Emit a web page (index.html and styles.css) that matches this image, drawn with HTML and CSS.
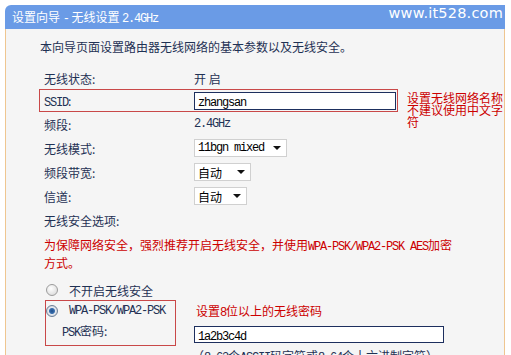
FILE: index.html
```html
<!DOCTYPE html>
<html lang="zh-CN">
<head>
  <meta charset="UTF-8">
  <title>设置向导 - 无线设置</title>
  <link rel="stylesheet" href="styles.css">
</head>
<body>

  <div class="wizard">
    <!-- 标题栏 -->
    <div class="wizard-head">
      <span class="title">设置向导 <span class="asc">-</span> 无线设置 <span class="asc">2.4GHz</span></span>
      <span class="site">www.it528.com</span>
    </div>

    <div class="wizard-body">
      <p class="intro">本向导页面设置路由器无线网络的基本参数以及无线安全。</p>

      <div class="row first">
        <span class="label">无线状态:</span>
        <span class="value">开 启</span>
      </div>

      <div class="row-ssid">
        <div class="row boxed">
          <span class="label"><span class="asc">SSID</span>:</span>
          <span class="textbox ssid"><span class="asc">zhangsan</span></span>
        </div>
        <div class="note">设置无线网络名称不建议使用中文字符</div>
      </div>

      <div class="row">
        <span class="label">频段:</span>
        <span class="value asc">2.4GHz</span>
      </div>

      <div class="row">
        <span class="label">无线模式:</span>
        <span class="select mode"><span class="asc">11bgn mixed</span><i class="arrow"></i></span>
      </div>

      <div class="row">
        <span class="label">频段带宽:</span>
        <span class="select width"><span>自动</span><i class="arrow"></i></span>
      </div>

      <div class="row">
        <span class="label">信道:</span>
        <span class="select channel"><span>自动</span><i class="arrow"></i></span>
      </div>

      <div class="row">
        <span class="label">无线安全选项:</span>
      </div>

      <p class="warn">为保障网络安全，强烈推荐开启无线安全，并使用<span class="asc">WPA-PSK/WPA2-PSK AES</span>加密方式。</p>

      <div class="option off">
        <span class="radio"></span>
        <span>不开启无线安全</span>
      </div>

      <div class="psk">
        <div class="psk-box">
          <div class="option">
            <span class="radio on"></span>
            <span class="asc">WPA-PSK/WPA2-PSK</span>
          </div>
          <div class="psk-label"><span class="asc">PSK</span>密码:</div>
        </div>
        <div class="psk-right">
          <div class="psk-note">设置<span class="asc">8</span>位以上的无线密码</div>
          <span class="textbox pass"><span class="asc">1a2b3c4d</span></span>
        </div>
      </div>

      <p class="hint">（<span class="asc">8-63</span>个<span class="asc">ASCII</span>码字符或<span class="asc">8-64</span>个十六进制字符）</p>
    </div>
  </div>

</body>
</html>
```

FILE: styles.css
```css
* {
  box-sizing: border-box;
}

body {
  margin: 0;
  background-color: #fff;
  font-family: "Noto Sans CJK SC", sans-serif;
  font-size: 12px;
  color: #1f3154;
}

p {
  margin: 0;
}

/* ascii in the old router UI is half-width */
.asc {
  font-family: "Liberation Mono", monospace;
  font-size: 12px;
  letter-spacing: -1.2px;
  line-height: 1;
}

.wizard {
  width: 500px;
  margin: 5px 0 0 5px;
}

.wizard-head {
  height: 24px;
  background-color: #6a9be6;
  border-radius: 6px 0 0 0;
  display: flex;
  justify-content: space-between;
  color: #fff;
  padding: 0 2px 0 7px;
}

.title {
  line-height: 24px;
}

.site {
  font-family: "DejaVu Sans", sans-serif;
  font-size: 14.5px;
  line-height: 16px;
  letter-spacing: 0.2px;
}

.wizard-body {
  background-color: #f5f5f5;
  border-left: 1px solid #efc690;
  border-right: 1px solid #efc690;
  padding: 10px 0 0 34px;
  height: 330px;
}

.intro {
  line-height: 16px;
  margin-bottom: 13px;
}

.row {
  display: grid;
  grid-template-columns: 150px auto;
  align-items: center;
  height: 24px;
  padding-left: 4px;
  margin-left: -1px;
  border: 1px solid transparent;
}

.row.first {
  height: 21px;
}

.row-ssid {
  display: flex;
  height: 23px;
}

.row.boxed {
  width: 359px;
  height: 23px;
  border-color: #c94848;
}

.note {
  width: 96px;
  margin-left: 9px;
  padding-top: 3px;
  line-height: 12px;
  color: #cc0000;
}

.textbox {
  display: block;
  height: 18px;
  line-height: 16px;
  border: 1px solid #1d2f5e;
  background-color: #fff;
  padding: 0 3px;
  color: #000;
}

.textbox.ssid {
  width: 202px;
}

.textbox.pass {
  width: 250px;
  height: 17px;
  line-height: 15px;
  margin-top: 4px;
}

.select {
  display: flex;
  justify-content: space-between;
  align-items: center;
  height: 18px;
  border: 1px solid #d0d0d0;
  background-color: #fff;
  padding: 0 5px 0 3px;
  color: #000;
}

.select.mode {
  width: 93px;
}

.select.width {
  width: 57px;
}

.select.channel {
  width: 53px;
}

.arrow {
  width: 0;
  height: 0;
  border-left: 4px solid transparent;
  border-right: 4px solid transparent;
  border-top: 4px solid #111;
}

.warn {
  margin: 4px 0 0 4px;
  width: 415px;
  line-height: 18px;
  color: #cc0000;
}

.option {
  display: flex;
  align-items: center;
  height: 20px;
  gap: 11px;
}

.option.off {
  margin: 8px 0 0 6px;
}

.radio {
  width: 12px;
  height: 12px;
  border-radius: 50%;
  border: 1px solid #9c9c9c;
  background: radial-gradient(circle at 40% 35%, #fff, #d4d4d4);
}

.radio.on {
  border-color: #6d7f96;
  background: radial-gradient(circle at 50% 50%, #1f4f8c 0, #3a6fae 2.5px, #e4e8ee 3.5px, #c9ced6 6px);
}

.psk {
  display: flex;
  margin-left: 5px;
}

.psk-box {
  width: 131px;
  height: 46px;
  border: 1px solid #c94848;
}

.psk-label {
  height: 20px;
  line-height: 20px;
  padding-left: 16px;
}

.psk-right {
  margin-left: 18px;
}

.psk-note {
  height: 22px;
  line-height: 22px;
  padding-left: 2px;
  color: #cc0000;
}

.hint {
  margin: 2px 0 0 152px;
  line-height: 16px;
}
```
